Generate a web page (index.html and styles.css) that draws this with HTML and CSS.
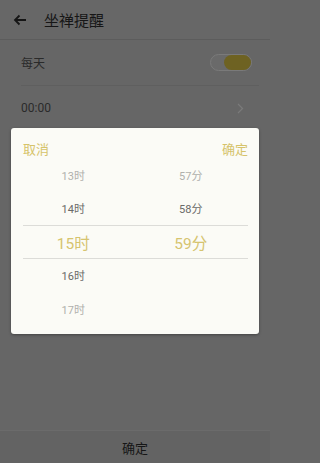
FILE: index.html
```html
<!DOCTYPE html>
<html>
<head>
<meta charset="utf-8">
<link rel="stylesheet" href="styles.css">
</head>
<body>
<div class="page">
  <div class="header">
    <svg class="back" width="14" height="12" viewBox="0 0 14 12"><path d="M13 6H2M6.5 1.5L2 6l4.5 4.5" fill="none" stroke="#151515" stroke-width="1.8"/></svg>
    <span class="title">坐禅提醒</span>
  </div>
  <div class="row row-day">
    <span class="label">每天</span>
    <span class="toggle"><span class="knob"></span></span>
  </div>
  <div class="row row-time">
    <span class="label">00:00</span>
    <svg class="chev" width="7" height="11" viewBox="0 0 7 11"><path d="M1 1l4.5 4.5L1 10" fill="none" stroke="#7a7a7a" stroke-width="1.3"/></svg>
  </div>
  <div class="spacer"></div>
  <div class="bottom">确定</div>

  <div class="overlay">
    <div class="dialog">
      <div class="dlg-head">
        <span class="act">取消</span>
        <span class="act">确定</span>
      </div>
      <div class="wheel">
        <div class="wrow far"><span>13时</span><span>57分</span></div>
        <div class="wrow near"><span>14时</span><span>58分</span></div>
        <div class="wrow sel"><span>15时</span><span>59分</span></div>
        <div class="wrow near"><span>16时</span><span></span></div>
        <div class="wrow far"><span>17时</span><span></span></div>
      </div>
    </div>
  </div>
</div>
</body>
</html>
```

FILE: styles.css
```css
html, body {
  margin: 0;
  padding: 0;
}
body {
  font-family: Roboto, "Noto Sans CJK SC", sans-serif;
  background: #666666;
}
.page {
  position: relative;
  width: 270px;
  height: 463px;
  display: flex;
  flex-direction: column;
  background: #666666;
  overflow: hidden;
}
.header {
  height: 39px;
  display: flex;
  align-items: center;
  border-bottom: 1px solid #5c5c5c;
  background: #676767;
}
.back {
  margin-left: 13px;
  margin-right: 17px;
}
.title {
  font-size: 15px;
  color: #161616;
}
.row {
  display: flex;
  align-items: center;
  justify-content: space-between;
  margin: 0 11px 0 21px;
}
.row-day {
  height: 45px;
  border-bottom: 1px solid #5f5f5f;
}
.row-time {
  height: 44px;
}
.label {
  font-size: 12px;
  color: #2a2a2a;
}
.toggle {
  width: 40px;
  height: 15px;
  border: 1px solid #7a7a7a;
  border-radius: 9px;
  display: flex;
  justify-content: flex-end;
  margin-right: 7px;
  background: #6a6a6a;
}
.knob {
  width: 27px;
  height: 15px;
  border-radius: 8px;
  background: #6e6222;
}
.chev {
  margin-right: 15px;
}
.spacer {
  flex: 1;
}
.bottom {
  height: 32px;
  border-top: 1px solid #6b6b6b;
  background: #636363;
  display: flex;
  align-items: center;
  justify-content: center;
  font-size: 13px;
  color: #161616;
}
.overlay {
  position: absolute;
  inset: 0;
  padding: 128px 11px 0 11px;
}
.dialog {
  background: #fbfbf6;
  border-radius: 3px;
  box-shadow: 0 1px 3px rgba(0,0,0,0.35);
  padding: 0 11px 8px 12px;
}
.dlg-head {
  height: 30px;
  padding-top: 13px;
  box-sizing: border-box;
  display: flex;
  justify-content: space-between;
  line-height: 18px;
}
.act {
  font-size: 13px;
  color: #d6c36a;
}
.wheel {
  display: flex;
  flex-direction: column;
}
.wrow {
  height: 33.5px;
  box-sizing: border-box;
  display: grid;
  grid-template-columns: 1fr 1fr;
  align-items: center;
  justify-items: center;
  font-size: 11px;
}
.wrow span:first-child {
  margin-left: -12px;
}
.wrow span:last-child {
  margin-left: -2px;
}
.far {
  color: #b0b0ac;
}
.near {
  color: #6a6a68;
}
.sel {
  font-size: 15.5px;
  color: #d6c46f;
  border-top: 1px solid #dcdcd8;
  border-bottom: 1px solid #dcdcd8;
}
```
